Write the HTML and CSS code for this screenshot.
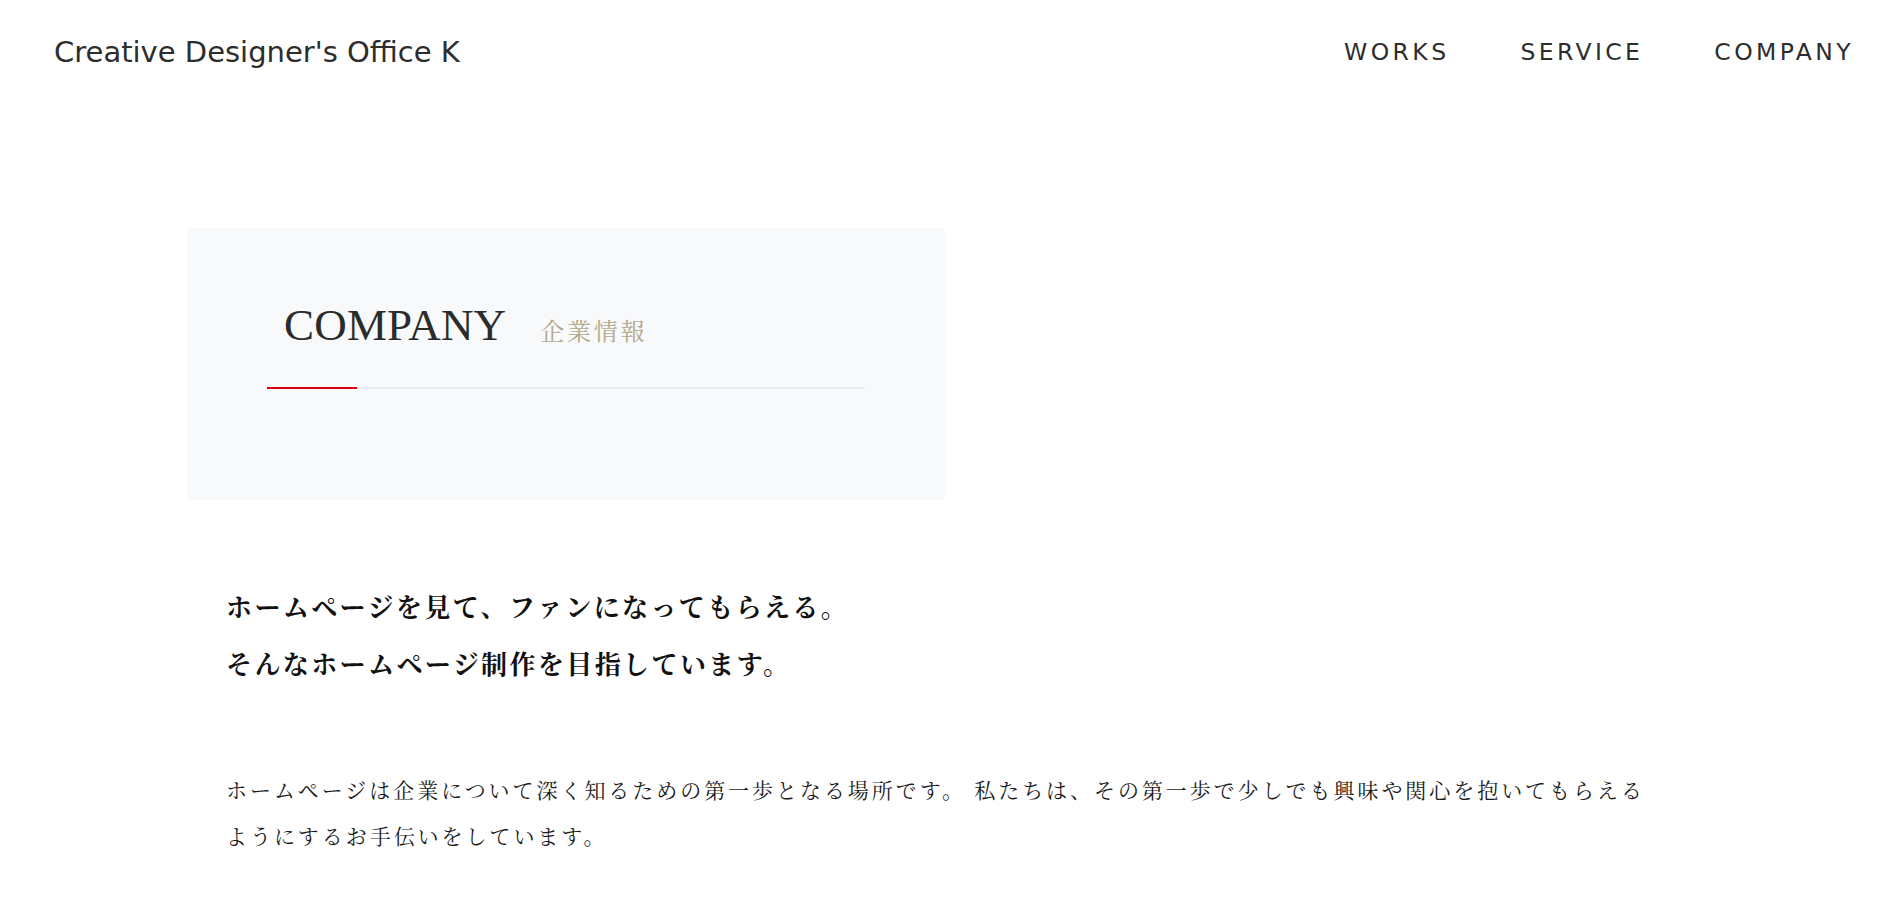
FILE: index.html
```html
<!DOCTYPE html>
<html lang="ja">
<head>
<meta charset="utf-8">
<title>Creative Designer's Office K</title>
<link rel="stylesheet" href="styles.css">
</head>
<body>
<header class="site-header">
  <div class="logo">Creative Designer's Office K</div>
  <nav class="nav">
    <a class="nav-link" href="#">WORKS</a>
    <a class="nav-link" href="#">SERVICE</a>
    <a class="nav-link" href="#">COMPANY</a>
  </nav>
</header>
<main class="page">
  <section class="title-box">
    <h1 class="title"><span class="title-en">COMPANY</span><span class="title-ja">企業情報</span></h1>
    <div class="rule"></div>
  </section>
  <section class="content">
    <p class="lead">ホームページを見て、ファンになってもらえる。<br>そんなホームページ制作を目指しています。</p>
    <p class="body-text">ホームページは企業について深く知るための第一歩となる場所です。 私たちは、その第一歩で少しでも興味や関心を抱いてもらえるようにするお手伝いをしています。</p>
  </section>
</main>
</body>
</html>
```
FILE: styles.css
```css
html, body {
  margin: 0;
  padding: 0;
  background: #ffffff;
}

body {
  font-family: "Noto Serif CJK JP", "Liberation Serif", "Noto Sans CJK JP", serif;
  color: #222;
}

.site-header {
  display: flex;
  justify-content: space-between;
  align-items: center;
  height: 104px;
  padding: 0 32px 0 54px;
}

.logo {
  font-family: "DejaVu Sans", "Noto Sans CJK JP", sans-serif;
  font-size: 29px;
  color: #2d2d2d;
  letter-spacing: 0;
}

.nav {
  display: flex;
  gap: 71px;
}

.nav-link {
  font-family: "DejaVu Sans", "Noto Sans CJK JP", sans-serif;
  font-size: 23.5px;
  letter-spacing: 3.4px;
  color: #2d2d2d;
  text-decoration: none;
}

.page {
  padding: 124px 0 60px 187px;
}

.title-box {
  width: 758px;
  height: 272px;
  box-sizing: border-box;
  padding: 72px 80px 0;
  background: #f8f9fa;
}

.title {
  display: flex;
  align-items: baseline;
  gap: 34px;
  margin: 0;
  padding-left: 17px;
  font-weight: normal;
  line-height: 50px;
}

.title-en {
  font-family: "Liberation Serif", serif;
  font-size: 45px;
  letter-spacing: 0.2px;
  color: #2b2b2b;
}

.title-ja {
  font-family: "Noto Serif CJK JP", "Noto Sans CJK JP", serif;
  font-size: 24px;
  letter-spacing: 2.7px;
  color: #b3a88b;
}

.rule {
  margin-top: 32px;
  height: 2px;
  background: linear-gradient(to right, #d9000f 90px, #ebecef 90px);
}

.content {
  padding-left: 39px;
  width: 1430px;
}

.lead {
  margin: 77px 0 0;
  font-family: "Noto Serif CJK JP", "Noto Sans CJK JP", serif;
  font-weight: bold;
  font-size: 26px;
  letter-spacing: 2.4px;
  line-height: 57px;
  color: #111;
}

.body-text {
  margin: 75px 0 0;
  font-family: "Noto Serif CJK JP", "Noto Sans CJK JP", serif;
  font-size: 21px;
  letter-spacing: 2.95px;
  line-height: 46px;
  color: #1a1a1a;
}
```
